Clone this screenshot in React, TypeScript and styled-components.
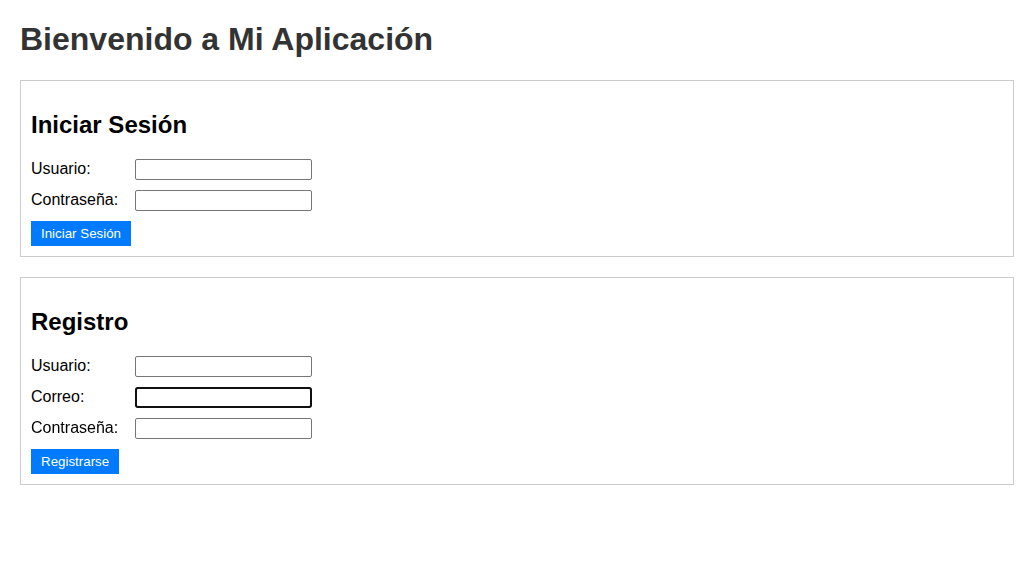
import styled, { createGlobalStyle } from 'styled-components';

const GlobalStyle = createGlobalStyle`
  body {
    margin: 0;
    padding: 21.44px 20px 20px;
    font-family: "Liberation Sans", Arial, sans-serif;
    background-color: #ffffff;
    color: #000000;
  }
`;

interface IField {
  id: string;
  label: string;
  type: string;
  focused?: boolean;
}

const loginFields: IField[] = [
  { id: 'login-user', label: 'Usuario:', type: 'text' },
  { id: 'login-pass', label: 'Contraseña:', type: 'password' },
];

const registerFields: IField[] = [
  { id: 'reg-user', label: 'Usuario:', type: 'text' },
  { id: 'reg-mail', label: 'Correo:', type: 'email', focused: true },
  { id: 'reg-pass', label: 'Contraseña:', type: 'password' },
];

const FormCard = ({
  title,
  fields,
  submit,
}: {
  title: string;
  fields: IField[];
  submit: string;
}): React.ReactElement => (
  <Card>
    <CardTitle>{title}</CardTitle>
    <Form onSubmit={e => e.preventDefault()}>
      {fields.map(field => (
        <FieldRow key={field.id}>
          <FieldLabel htmlFor={field.id}>{field.label}</FieldLabel>
          <FieldInput
            id={field.id}
            type={field.type}
            $focused={field.focused}
            autoFocus={field.focused}
          />
        </FieldRow>
      ))}
      <SubmitButton type="submit">{submit}</SubmitButton>
    </Form>
  </Card>
);

const App = (): React.ReactElement => {
  return (
    <>
      <GlobalStyle />
      <Title>Bienvenido a Mi Aplicación</Title>
      <FormCard title="Iniciar Sesión" fields={loginFields} submit="Iniciar Sesión" />
      <FormCard title="Registro" fields={registerFields} submit="Registrarse" />
    </>
  );
};

export default App;

const Title = styled.h1`
  font-size: 32px;
  font-weight: bold;
  color: #333333;
  margin: 0 0 21.44px;
`;

const Card = styled.section`
  border: 1px solid #cccccc;
  padding: 10px;
  margin-bottom: 20px;
`;

const CardTitle = styled.h2`
  font-size: 24px;
  font-weight: bold;
  margin: 19.92px 0;
`;

const Form = styled.form`
  display: flex;
  flex-direction: column;
  align-items: flex-start;
  gap: 10px;
`;

const FieldRow = styled.div`
  display: flex;
  align-items: center;
  height: 21px;
`;

const FieldLabel = styled.label`
  width: 104px;
  font-size: 16px;
`;

const FieldInput = styled.input<{ $focused?: boolean }>`
  box-sizing: border-box;
  width: 177px;
  height: 21px;
  padding: 1px 2px;
  border: 1px solid #767676;
  border-radius: 2px;
  font-family: "Liberation Sans", Arial, sans-serif;
  font-size: 13.333px;
  outline: ${p => (p.$focused ? '2px solid #101010' : 'none')};
  outline-offset: -2px;
  ${p => p.$focused && 'border-radius: 3px;'}

  &:focus {
    outline: 2px solid #101010;
    outline-offset: -2px;
    border-radius: 3px;
  }
`;

const SubmitButton = styled.button`
  background-color: #007bff;
  color: #ffffff;
  border: 0;
  padding: 5px 10px;
  font-family: "Liberation Sans", Arial, sans-serif;
  font-size: 13.333px;
  line-height: 15px;
  cursor: pointer;
`;
